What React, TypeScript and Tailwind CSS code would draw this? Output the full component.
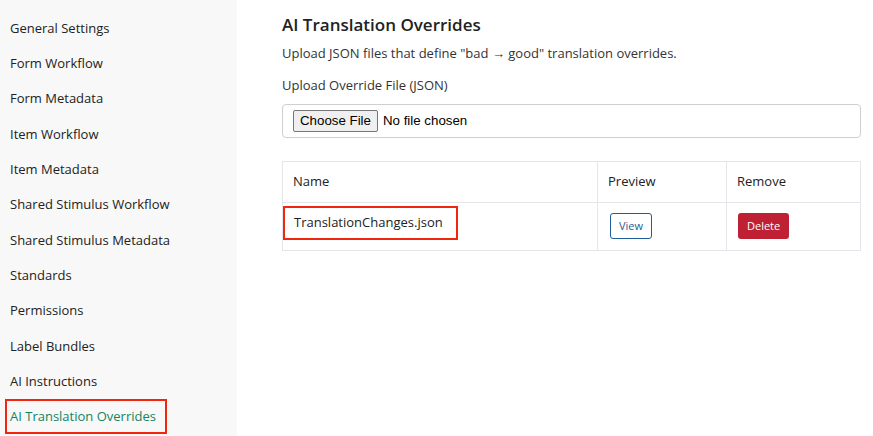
import React from 'react';

const navItems = [
  'General Settings',
  'Form Workflow',
  'Form Metadata',
  'Item Workflow',
  'Item Metadata',
  'Shared Stimulus Workflow',
  'Shared Stimulus Metadata',
  'Standards',
  'Permissions',
  'Label Bundles',
  'AI Instructions',
  'AI Translation Overrides',
];

const ACTIVE = 'AI Translation Overrides';

const Sidebar: React.FC = () => (
  <aside className="w-[237px] shrink-0 bg-[#f8f8f8] pt-[11px]">
    <ul className="flex flex-col">
      {navItems.map((item) => (
        <li key={item} className="h-[35.3px] flex items-center">
          {item === ACTIVE ? (
            <span className="ml-[5px] h-[35px] pl-[3px] pr-[9px] flex items-center border-2 border-[#f0260f] text-[#14845f] text-[13px]">
              {item}
            </span>
          ) : (
            <span className="ml-[10px] text-[13px] text-[#222]">{item}</span>
          )}
        </li>
      ))}
    </ul>
  </aside>
);

const App: React.FC = () => {
  return (
    <div className="flex h-[436px] w-[873px] overflow-hidden bg-white font-['Open_Sans',sans-serif] text-[#222]">
      <Sidebar />
      <main className="flex-1 pl-[45px] pr-[12px] pt-[12px]">
        <h2 className="text-[17px] font-semibold text-[#222]">AI Translation Overrides</h2>
        <p className="mt-[6px] text-[13px] text-[#333]">Upload JSON files that define "bad → good" translation overrides.</p>
        <label className="block mt-[13px] text-[13px] text-[#333]">Upload Override File (JSON)</label>
        <div className="mt-[8px] h-[34px] border border-[#cfcfcf] rounded-[4px] flex items-center pl-[10px]">
          <span className="h-[22px] px-[6px] flex items-center bg-[#efefef] border border-[#767676] rounded-[2px] text-[13.3px] font-['Liberation_Sans',sans-serif] text-black">Choose File</span>
          <span className="ml-[5px] text-[13.3px] font-['Liberation_Sans',sans-serif] text-black">No file chosen</span>
        </div>
        <table className="mt-[23px] w-full border-collapse text-[13px]">
          <thead>
            <tr className="h-[41px]">
              <th className="border border-[#e5e5ea] text-left font-medium pl-[10px] w-[315px]">Name</th>
              <th className="border border-[#e5e5ea] text-left font-medium pl-[10px] w-[129px]">Preview</th>
              <th className="border border-[#e5e5ea] text-left font-medium pl-[10px]">Remove</th>
            </tr>
          </thead>
          <tbody>
            <tr className="h-[48px]">
              <td className="border border-[#e5e5ea] p-0 align-top">
                <div className="mt-[3px] w-[175px] h-[34px] border-2 border-[#f0260f] flex items-center pl-[9px]">TranslationChanges.json</div>
              </td>
              <td className="border border-[#e5e5ea] pl-[12px]">
                <button className="h-[26px] px-[8px] border border-[#1f5e99] rounded-[3px] text-[11px] text-[#1f5e99] bg-white">View</button>
              </td>
              <td className="border border-[#e5e5ea] pl-[11px]">
                <button className="h-[26px] px-[9px] rounded-[3px] text-[11px] text-white bg-[#c02033]">Delete</button>
              </td>
            </tr>
          </tbody>
        </table>
      </main>
    </div>
  );
};

export default App;
